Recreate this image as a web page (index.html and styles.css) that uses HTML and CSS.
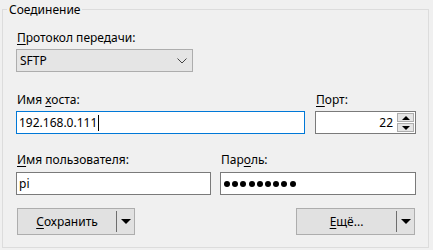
FILE: index.html
```html
<!DOCTYPE html>
<html lang="ru">
<head>
    <meta charset="UTF-8">
    <title>Соединение</title>
    <link rel="stylesheet" href="styles.css">
</head>
<body>
    <fieldset class="group">
        <legend>Соединение</legend>

        <div class="field">
            <label><u>П</u>ротокол передачи:</label>
            <div class="select">
                <span>SFTP</span>
                <svg width="10" height="6" viewBox="0 0 10 6"><path d="M0.5 0.5 L5 5 L9.5 0.5" fill="none" stroke="#444" stroke-width="1"/></svg>
            </div>
        </div>

        <div class="row host-row">
            <div class="field host">
                <label>Имя <u>х</u>оста:</label>
                <div class="input focused">192.168.0.111<span class="caret"></span></div>
            </div>
            <div class="field port">
                <label><u>П</u>орт:</label>
                <div class="input spin">
                    <span class="num">22</span>
                    <div class="spinner">
                        <span class="spin-btn"><i class="tri up"></i></span>
                        <span class="spin-btn"><i class="tri down"></i></span>
                    </div>
                </div>
            </div>
        </div>

        <div class="row user-row">
            <div class="field user">
                <label><u>И</u>мя пользователя:</label>
                <div class="input">pi</div>
            </div>
            <div class="field pass">
                <label>Пар<u>о</u>ль:</label>
                <div class="input dots">
                    <i></i><i></i><i></i><i></i><i></i><i></i><i></i><i></i><i></i>
                </div>
            </div>
        </div>

        <div class="row buttons">
            <div class="split-btn">
                <span class="main"><u>С</u>охранить</span>
                <span class="sep"></span>
                <span class="drop"><i class="tri down"></i></span>
            </div>
            <div class="split-btn more">
                <span class="main"><u>Е</u>щё...</span>
                <span class="sep"></span>
                <span class="drop"><i class="tri down"></i></span>
            </div>
        </div>
    </fieldset>
</body>
</html>
```

FILE: styles.css
```css
* {
    box-sizing: border-box;
}

body {
    margin: 0;
    width: 433px;
    height: 250px;
    overflow: hidden;
    background: #f0f0f0;
    color: #000;
    font-family: "Noto Sans", sans-serif;
    font-size: 12px;
}

.group {
    margin: 2px 4px 0 2px;
    border: 1px solid #dcdcdc;
    padding: 13px 12px 12px 13px;
    min-width: 0;
}

.group legend {
    margin-left: -9px;
    padding: 0 2px;
    line-height: 15px;
}

label {
    display: block;
    line-height: 15px;
    padding-left: 1px;
    margin-bottom: 4px;
}

u {
    text-decoration-thickness: 1px;
    text-underline-offset: 2px;
}

.row {
    display: flex;
    justify-content: space-between;
}

.host-row {
    margin-top: 20px;
}

.user-row {
    margin-top: 18px;
}

.user-row label {
    margin-bottom: 5px;
}

.select {
    width: 177px;
    height: 23px;
    border: 1px solid #adadad;
    background: #e5e5e5;
    display: flex;
    align-items: center;
    justify-content: space-between;
    padding: 0 5px 0 3px;
}

.input {
    height: 23px;
    border: 1px solid #7a7a7a;
    background: #fff;
    display: flex;
    align-items: center;
    padding: 0 2px;
}

.input.focused {
    border-color: #0078d7;
}

.caret {
    display: inline-block;
    width: 1px;
    height: 16px;
    background: #000;
    margin-left: 1px;
}

.host {
    width: 289px;
}

.port {
    width: 101px;
}

.spin {
    justify-content: flex-end;
    padding: 1px;
}

.spin .num {
    margin-right: 4px;
}

.spinner {
    width: 17px;
    height: 19px;
    display: flex;
    flex-direction: column;
    gap: 1px;
}

.spin-btn {
    flex: 1;
    border: 1px solid #adadad;
    background: #e5e5e5;
    display: flex;
    align-items: center;
    justify-content: center;
}

.tri {
    width: 0;
    height: 0;
    border-left: 4px solid transparent;
    border-right: 4px solid transparent;
}

.tri.up {
    border-bottom: 4px solid #000;
}

.tri.down {
    border-top: 4px solid #000;
}

.user {
    width: 195px;
}

.pass {
    width: 196px;
}

.dots {
    gap: 2.2px;
    padding-left: 3px;
}

.dots i {
    width: 6px;
    height: 6px;
    border-radius: 50%;
    background: #000;
}

.buttons {
    margin-top: 13px;
    padding: 0 1px;
}

.split-btn {
    width: 118px;
    height: 27px;
    border: 1px solid #adadad;
    background: #e1e1e1;
    display: flex;
    align-items: center;
}

.split-btn.more {
    width: 119px;
}

.split-btn .main {
    flex: 1;
    text-align: center;
}

.split-btn .sep {
    width: 1px;
    height: 21px;
    background: #6d6d6d;
}

.split-btn .drop {
    width: 17px;
    display: flex;
    justify-content: center;
}

.split-btn .tri {
    border-left-width: 5px;
    border-right-width: 5px;
    border-top-width: 5px;
}
```
